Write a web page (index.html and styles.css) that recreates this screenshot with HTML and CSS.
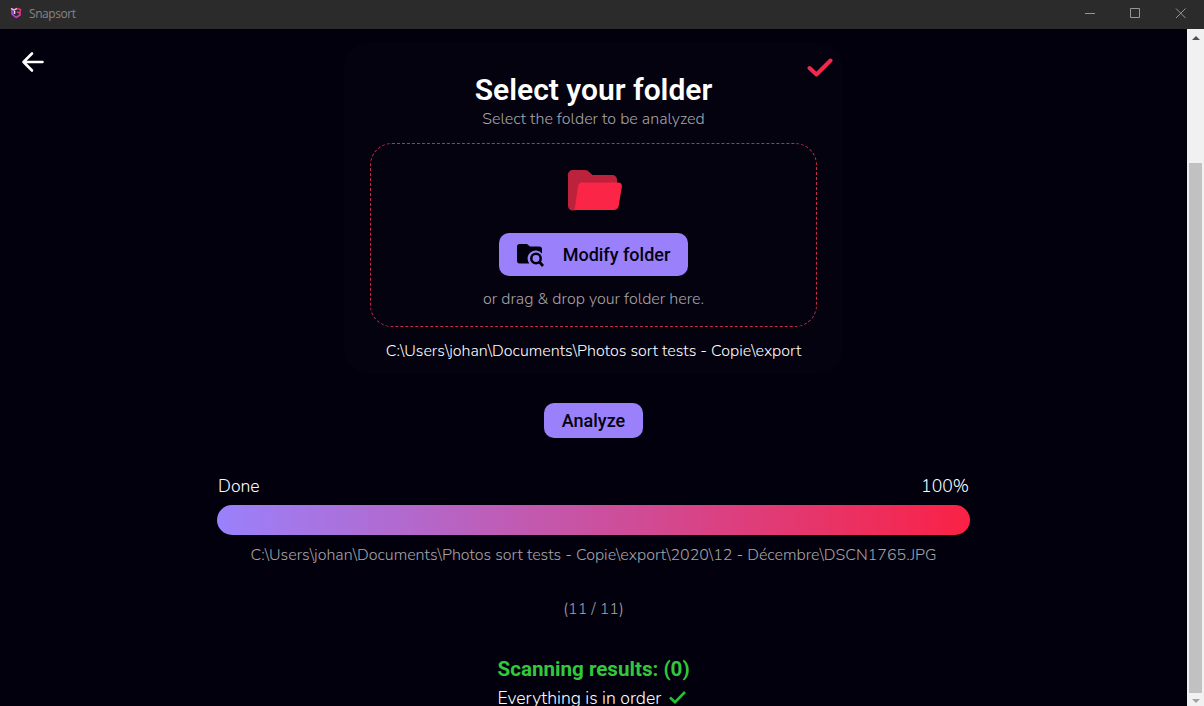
FILE: index.html
```html
<!DOCTYPE html>
<html lang="en">
<head>
<meta charset="utf-8">
<title>Snapsort</title>
<link rel="stylesheet" href="styles.css">
</head>
<body>
<header class="titlebar">
  <svg class="logo" viewBox="0 0 12 12" width="12" height="12" fill="none" stroke-width="1.6"><path d="M1 1.500L4 3 7 1.500" stroke="#f3a6dc"/><path d="M2 3v4l4 3.500" stroke="#b14be0"/><path d="M7 1.500l3.500 1-.5 3" stroke="#ef2f58"/><path d="M6 10.500l4-2.500V6L7 5" stroke="#dc38b4"/><path d="M4.500 4v3" stroke="#f4d5f2"/></svg>
  <span class="app-name">Snapsort</span>
  <svg class="controls" viewBox="0 0 138 28" width="138" height="28" fill="none" stroke="#969696"><path d="M19 13.500h10M64.500 8.500h9v9h-9zM110 8.500l9.500 9.500M119.500 8.500L110 18"/></svg>
</header>
<div class="viewport">
  <nav class="side">
    <svg width="24" height="24" viewBox="0 0 24 24" fill="none" stroke="#fff" stroke-width="2.600" stroke-linecap="round" stroke-linejoin="round"><path d="M21.500 12H2.500M11 3.500L2.500 12l8.500 8.500"/></svg>
  </nav>
  <main class="content">
    <section class="card">
      <svg class="card-check" width="26" height="20" viewBox="0 0 26 20" fill="none" stroke="#f0294e" stroke-width="4" stroke-linecap="round" stroke-linejoin="round"><path d="M2.500 10L9.500 16.500 23.500 2.500"/></svg>
      <h1 class="title">Select your folder</h1>
      <p class="text muted subtitle"><span>Select the folder to be analyzed</span></p>
      <div class="dropzone">
        <svg class="folder" width="54" height="41" viewBox="0 0 54 41"><path fill="#bd223d" d="M5 0h12c2 0 3 .8 4.500 2.300L24.500 5H44c3 0 5 2 5 5v25L5 40.500c-3 0-5-2-5-5V5c0-3 2-5 5-5z"/><path fill="#fa2547" d="M14 12.500h36c3 0 4.200 1.800 3.800 4.500l-3 18.500c-.5 3-2.500 4.500-5.500 4.500H6.500L10 16.500c.5-2.500 1.500-4 4-4z"/></svg>
        <button class="button modify">
          <svg width="27" height="23" viewBox="0 0 27 23"><path fill="#02000d" d="M2.500 0h7.500l3 2.500h9.500c1.500 0 2.500 1 2.500 2.500v4.500A7.500 7.500 0 0 0 12.300 19.500H2.500C1 19.500 0 18.500 0 17V2.500C0 1 1 0 2.500 0z"/><circle cx="19" cy="14.500" r="4.700" fill="none" stroke="#02000d" stroke-width="2.500"/><path d="M22.500 18l3.500 4" stroke="#02000d" stroke-width="2.700"/></svg>
          <span>Modify folder</span>
        </button>
        <p class="text muted hint"><span>or drag &amp; drop your folder here.</span></p>
      </div>
      <p class="text path"><span>C:\Users\johan\Documents\Photos sort tests - Copie\export</span></p>
    </section>
    <button class="button analyze">Analyze</button>
    <section class="progress">
      <div class="progress-labels"><span>Done</span><span>100%</span></div>
      <div class="bar"></div>
      <p class="text muted file"><span>C:\Users\johan\Documents\Photos sort tests - Copie\export\2020\12 - Décembre\DSCN1765.JPG</span></p>
      <p class="text muted count"><span>(11 / 11)</span></p>
    </section>
    <section class="results">
      <h2>Scanning results: (0)</h2>
      <p class="order"><span>Everything is in order</span><svg width="17" height="13" viewBox="0 0 17 13" fill="none" stroke="#20c72b" stroke-width="2.600"><path d="M1 6.500L6 11.200 16 1"/></svg></p>
    </section>
  </main>
  <aside class="scrollbar"><i class="up"></i><div class="thumb"></div><i class="down"></i></aside>
</div>
</body>
</html>
```
FILE: styles.css
```css
* { box-sizing: border-box; }
html, body { margin: 0; height: 100%; overflow: hidden; }
body { display: flex; flex-direction: column; background: #02000d; color: #fff; font-family: Nunito, "Open Sans", sans-serif; font-weight: 300; }
h1, h2, p { margin: 0; }
.titlebar { flex: 0 0 29px; display: flex; background: #2b2b2b; color: #858585; }
.logo { margin: 7px 0 0 10px; }
.app-name { margin-left: 7px; font: 400 12px/28px "Open Sans", sans-serif; letter-spacing: -0.45px; }
.controls { margin-left: auto; }
.viewport { flex: 1; min-height: 0; display: grid; grid-template-columns: 66px 1055px 66px 17px; }
.side { padding: 21px 0 0 21px; }
.content { display: flex; flex-direction: column; align-items: center; grid-column: 2; min-height: 0; overflow: hidden; padding-top: 14px; }
.content > * { flex-shrink: 0; }
.card { position: relative; width: 499px; height: 330px; padding: 27px 26px 0; border-radius: 24px; background: #05020f; }
.card-check { position: absolute; left: 463px; top: 15px; }
.title { font: 600 30px/40px Roboto, sans-serif; text-align: center; color: #fff; white-space: nowrap; }
.text { display: flex; justify-content: center; font-size: 16px; line-height: 22px; white-space: nowrap; }
.muted { color: #a5a4a8; }
.subtitle { margin-top: -2px; }
.dropzone { display: flex; flex-direction: column; align-items: center; height: 184px; margin-top: 13px; padding-top: 26px; border: 1px dashed #c42b47; border-radius: 22px; }
.folder { margin-left: 2px; }
.button { display: flex; align-items: center; justify-content: center; border: 0; border-radius: 10px; background: #9a81fb; color: #02000d; font: 500 18px/24px Roboto, sans-serif; }
.modify { width: 189px; height: 43px; margin-top: 22px; padding: 0; gap: 19px; }
.modify svg { position: relative; top: 1px; }
.hint { margin-top: 12px; }
.path { margin-top: 13px; }
.analyze { width: 99px; height: 35px; margin-top: 30px; padding: 0; }
.progress { width: 753px; margin-top: 36px; }
.progress-labels { display: flex; justify-content: space-between; font-size: 17.6px; line-height: 24px; padding: 0 1px; }
.bar { height: 30px; margin-top: 7px; border-radius: 15px; background: linear-gradient(90deg, #9a81fb, #fa2145); }
.file { margin-top: 9px; }
.count { margin-top: 32px; }
.results { margin-top: 35px; width: 192px; white-space: nowrap; }
.results h2 { font: 700 20.6px/28px Roboto, sans-serif; color: #32c83c; }
.order { display: flex; align-items: center; gap: 8px; margin-top: 3px; font-size: 17.6px; line-height: 24px; }
.order svg { position: relative; top: -1px; }
.scrollbar { grid-column: 4; display: flex; flex-direction: column; align-items: center; background: #f1f1f1; }
.thumb { width: 13px; height: 530px; margin-top: 123px; background: #c1c1c1; }
.up, .down { border: 4px solid transparent; }
.up { margin-top: 7px; border-top-width: 0; border-bottom-color: #505050; }
.down { margin-top: 6px; border-bottom-width: 0; border-top-color: #a3a3a3; }
```
